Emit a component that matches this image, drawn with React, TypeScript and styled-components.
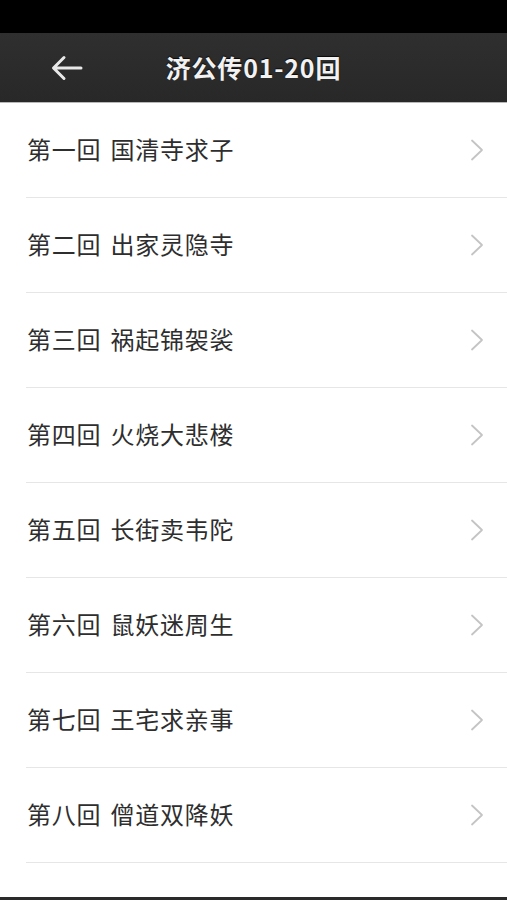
import React from "react";
import styled, { createGlobalStyle } from "styled-components";

const GlobalStyle = createGlobalStyle`
  html, body { margin: 0; padding: 0; background: #ffffff; }
  body { font-family: "Noto Sans CJK SC", "Liberation Sans", sans-serif; }
`;

const Screen = styled.div`
  width: 507px;
  height: 900px;
  display: flex;
  flex-direction: column;
  overflow: hidden;
  background: #ffffff;
`;

const StatusBar = styled.div`
  height: 33px;
  flex: none;
  background: #000000;
`;

const Header = styled.header`
  position: relative;
  height: 69px;
  flex: none;
  background: linear-gradient(#2f2f2f, #282828);
  border-bottom: 1px solid #b8b8b8;
  display: flex;
  align-items: center;
  justify-content: center;
`;

const BackButton = styled.button`
  position: absolute;
  left: 48px;
  top: 50%;
  transform: translateY(-50%);
  width: 38px;
  height: 38px;
  padding: 0;
  border: none;
  background: transparent;
  display: flex;
  align-items: center;
  justify-content: center;
`;

const Title = styled.h1`
  margin: 0 0 2px 0;
  color: #f2f2f2;
  font-family: "Noto Sans CJK SC", "Liberation Sans", sans-serif;
  font-size: 25px;
  font-weight: 700;
  letter-spacing: 0.8px;
  text-shadow: 0 -1px 1px rgba(0, 0, 0, 0.8);
`;

const List = styled.ul`
  flex: 1;
  margin: 0;
  padding: 0 0 0 26px;
  list-style: none;
  overflow: hidden;
`;

const Row = styled.li`
  height: 94px;
  border-bottom: 1px solid #e6e6e6;
  display: flex;
  align-items: center;
  justify-content: space-between;
  padding: 0 22px 0 1px;
`;

const RowText = styled.span`
  display: flex;
  gap: 9px;
  margin-top: -3px;
  color: #2e2e2e;
  font-family: "Noto Sans CJK SC", "Liberation Sans", sans-serif;
  font-size: 24px;
  font-weight: 400;
  letter-spacing: 0.8px;
  white-space: nowrap;
`;

const BottomBar = styled.div`
  height: 3px;
  flex: none;
  background: #2a2a2a;
`;

const chapters: [string, string][] = [
  ["第一回", "国清寺求子"],
  ["第二回", "出家灵隐寺"],
  ["第三回", "祸起锦袈裟"],
  ["第四回", "火烧大悲楼"],
  ["第五回", "长街卖韦陀"],
  ["第六回", "鼠妖迷周生"],
  ["第七回", "王宅求亲事"],
  ["第八回", "僧道双降妖"],
  ["第九回", "古寺捉妖怪"],
];

const Chevron = () => (
  <svg width="16" height="24" viewBox="0 0 16 24" fill="none">
    <path d="M3 2.5 L13 12 L3 21.5" stroke="#c4c4c4" strokeWidth="1.8" strokeLinecap="round" strokeLinejoin="round" />
  </svg>
);

const BackArrow = () => (
  <svg width="32" height="26" viewBox="0 0 32 26" fill="none">
    <path d="M30 13 H3 M13 2.5 L2.5 13 L13 23.5" stroke="#e8e8e8" strokeWidth="3" strokeLinecap="round" strokeLinejoin="round" />
  </svg>
);

export default function App() {
  return (
    <Screen>
      <GlobalStyle />
      <StatusBar />
      <Header>
        <BackButton aria-label="返回">
          <BackArrow />
        </BackButton>
        <Title>济公传01-20回</Title>
      </Header>
      <List>
        {chapters.map(([num, name]) => (
          <Row key={num}>
            <RowText>
              <span>{num}</span>
              <span>{name}</span>
            </RowText>
            <Chevron />
          </Row>
        ))}
      </List>
      <BottomBar />
    </Screen>
  );
}
